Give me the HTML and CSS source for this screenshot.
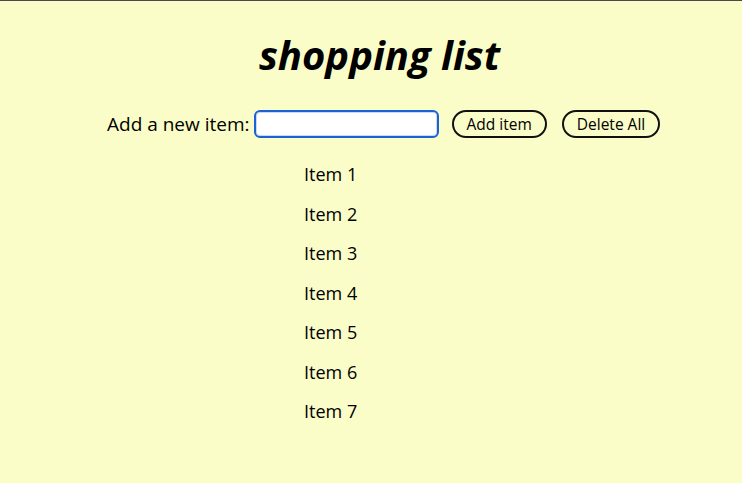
FILE: index.html
```html
<!DOCTYPE html>
<html>
<head>
<meta charset="utf-8">
<title>shopping list</title>
<link rel="stylesheet" href="styles.css">
</head>
<body>
<main class="app">
  <h1 class="title">shopping list</h1>
  <form class="add-form">
    <label class="add-label" for="item">Add a new item:</label>
    <input class="add-input" id="item" type="text" autofocus>
    <button class="btn" type="button">Add item</button>
    <button class="btn" type="button">Delete All</button>
  </form>
  <ul class="items">
    <li>Item 1</li>
    <li>Item 2</li>
    <li>Item 3</li>
    <li>Item 4</li>
    <li>Item 5</li>
    <li>Item 6</li>
    <li>Item 7</li>
  </ul>
</main>
</body>
</html>
```

FILE: styles.css
```css
html, body {
  margin: 0;
  padding: 0;
  height: 100%;
}
body {
  background: #fafdc8;
  border-top: 1px solid #4a4a4a;
  box-sizing: border-box;
  font-family: "Open Sans", "Noto Sans", sans-serif;
  color: #000;
}
.app {
  display: flex;
  flex-direction: column;
}
.title {
  margin: 29px 0 0 0;
  padding-left: 17px;
  text-align: center;
  font-size: 40px;
  font-weight: 700;
  font-style: italic;
  line-height: 50px;
}
.add-form {
  display: flex;
  align-items: center;
  margin: 30px 0 0 107px;
}
.add-label {
  font-size: 19px;
  margin-right: 4px;
}
.add-input {
  width: 185px;
  height: 28px;
  box-sizing: border-box;
  border: 2px solid #1a62d6;
  border-radius: 6px;
  background: #fff;
  box-shadow: inset 0 0 0 1px #c9d9f2;
  outline: none;
  padding: 0 4px;
  margin: 0;
}
.btn {
  font-family: "Open Sans", "Noto Sans", sans-serif;
  font-size: 15.5px;
  height: 28px;
  box-sizing: border-box;
  border: 2px solid #111;
  border-radius: 14px;
  background: #fafdc8;
  padding: 0 13px;
  margin: 0 0 0 13px;
  color: #000;
}
.btn + .btn {
  margin-left: 15px;
}
.items {
  list-style: none;
  margin: 17px 0 0 304px;
  padding: 0;
  font-size: 18px;
}
.items li {
  line-height: 39.5px;
}
```
